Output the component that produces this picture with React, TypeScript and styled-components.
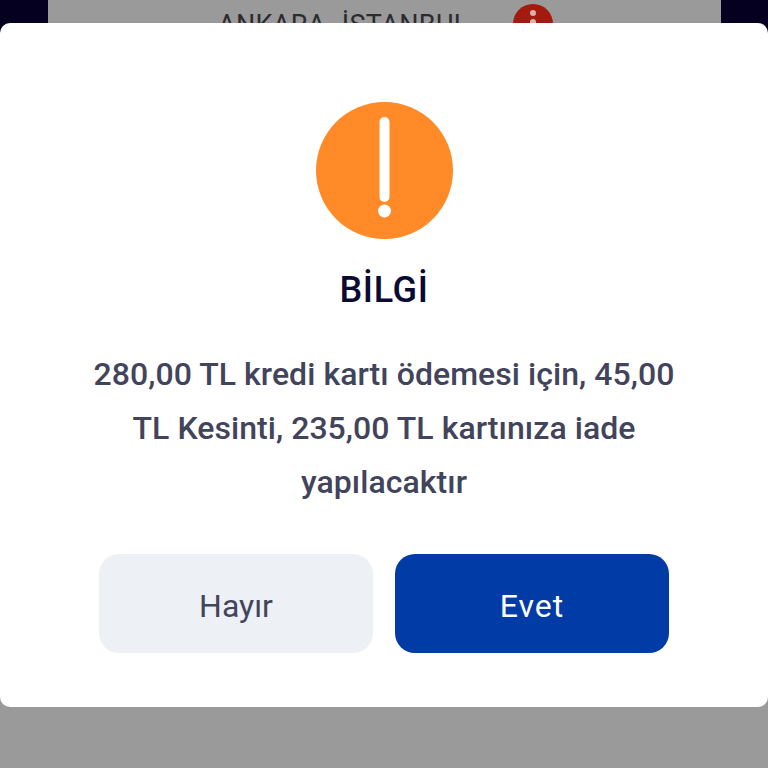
import React from "react";
import styled, { createGlobalStyle } from "styled-components";

const Global = createGlobalStyle`
  html, body { margin: 0; padding: 0; background: #9a9a9a; }
  * { box-sizing: border-box; }
`;

const Page = styled.div`
  position: relative;
  width: 768px;
  height: 768px;
  overflow: hidden;
  background: #9a9a9a;
  font-family: Roboto, "Noto Sans", sans-serif;
`;

const Backdrop = styled.div`
  height: 60px;
  padding: 0 47px 0 48px;
  background: #05001f;
`;

const BackdropBar = styled.div`
  height: 100%;
  background: #9a9a9a;
  display: flex;
  align-items: flex-start;
  padding: 4px 0 0 170px;
`;

const RouteTitle = styled.div`
  margin-top: 5px;
  width: 295px;
  font-size: 27px;
  line-height: 32px;
  font-weight: 400;
  letter-spacing: 0.35px;
  word-spacing: -3px;
  color: #2b2b30;
  white-space: nowrap;
`;

const AlertDot = styled.svg`
  width: 40px;
  height: 40px;
  flex: none;
`;

const Sheet = styled.section`
  position: absolute;
  top: 23px;
  left: 0;
  width: 768px;
  height: 684px;
  background: #fff;
  border-radius: 10px;
  display: flex;
  flex-direction: column;
  align-items: center;
  padding-top: 79px;
`;

const WarningIcon = styled.svg`
  width: 137px;
  height: 137px;
  flex: none;
`;

const Title = styled.h2`
  margin: 29px 0 0;
  font-size: 36px;
  line-height: 44px;
  font-weight: 500;
  letter-spacing: 0.6px;
  color: #0b0a33;
`;

const Message = styled.p`
  margin: 35px 0 0;
  width: 600px;
  text-align: center;
  font-size: 32px;
  line-height: 54px;
  font-weight: 500;
  letter-spacing: 0.05px;
  color: #42445c;
`;

const Actions = styled.div`
  display: flex;
  gap: 22px;
  margin-top: 45px;
`;

const ActionButton = styled.button<{ $primary?: boolean }>`
  width: 274px;
  height: 99px;
  padding: 5px 0 0;
  border: 0;
  border-radius: 20px;
  font-family: inherit;
  font-size: 32px;
  font-weight: 400;
  letter-spacing: ${(p) => (p.$primary ? "1px" : "0")};
  background: ${(p) => (p.$primary ? "#003ba6" : "#edf0f5")};
  color: ${(p) => (p.$primary ? "#fff" : "#42445c")};
`;

export default function App() {
  return (
    <Page>
      <Global />
      <Backdrop>
        <BackdropBar>
          <RouteTitle>ANKARA - İSTANBUL</RouteTitle>
          <AlertDot viewBox="0 0 40 40">
            <circle cx="20" cy="20" r="20" fill="#a31a0f" />
            <circle cx="20" cy="9" r="3" fill="#d9b0aa" />
            <rect x="17" y="15" width="6" height="16" rx="3" fill="#d9b0aa" />
          </AlertDot>
        </BackdropBar>
      </Backdrop>
      <Sheet>
        <WarningIcon viewBox="0 0 137 137">
          <circle cx="68.5" cy="68.5" r="68.5" fill="#ff8a27" />
          <rect x="63.5" y="15" width="10" height="85" rx="5" fill="#fff" />
          <circle cx="68.5" cy="109" r="6.5" fill="#fff" />
        </WarningIcon>
        <Title>BİLGİ</Title>
        <Message>
          280,00 TL kredi kartı ödemesi için, 45,00 TL Kesinti, 235,00 TL kartınıza iade yapılacaktır
        </Message>
        <Actions>
          <ActionButton>Hayır</ActionButton>
          <ActionButton $primary>Evet</ActionButton>
        </Actions>
      </Sheet>
    </Page>
  );
}
